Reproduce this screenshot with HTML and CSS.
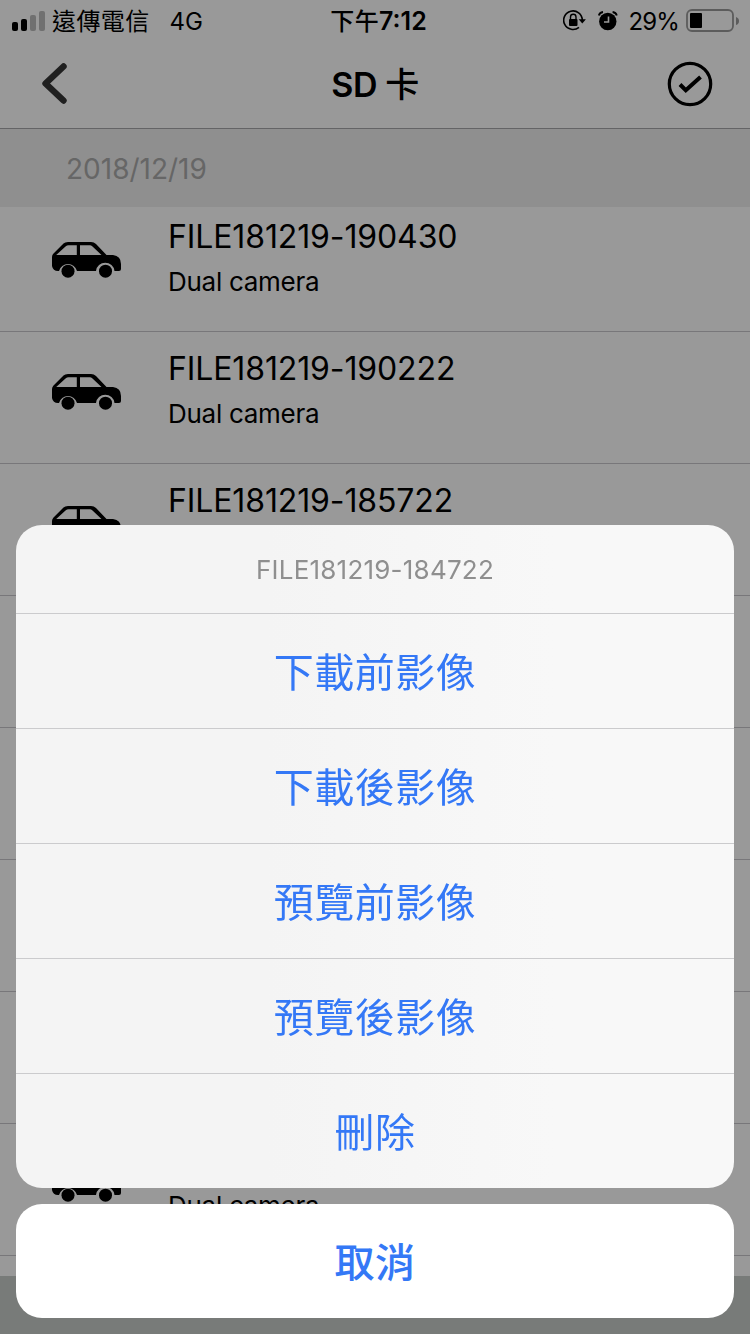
FILE: index.html
```html
<!DOCTYPE html>
<html lang="zh-Hant">
<head>
    <meta charset="UTF-8">
    <meta name="viewport" content="width=device-width, initial-scale=1.0">
    <title>SD 卡</title>
    <link rel="stylesheet" href="styles.css">
</head>
<body>

    <svg class="symbols" width="0" height="0">
        <symbol id="car" viewBox="0 0 70 37">
            <path fill-rule="evenodd" d="M0 27V15Q0 13 1.500 11.500L11.500 1.500Q13 0 16 0H39Q42 0 44 2L54.500 13H61Q69 14 69 22V27Q69 29 67 29H62.500A9.300 9.300 0 0 0 44 29H25A9.300 9.300 0 0 0 7 29H6Q1 29 0 24ZM4.200 13H24.800V3.300H16.500Q15 3.300 13.500 4.500ZM28 3.300V13H49.500L40.500 4.500Q39 3.300 38 3.300Z"/>
            <circle cx="16" cy="29.200" r="6.500"/>
            <circle cx="53.500" cy="29.200" r="6.500"/>
        </symbol>
    </svg>

    <div class="status-bar">
        <div class="status-left">
            <svg width="34" height="20" viewBox="0 0 34 20">
                <rect x="0" y="11" width="6" height="9" rx="2"/>
                <rect x="9" y="8" width="6" height="12" rx="2"/>
                <rect x="18" y="4" width="6" height="16" rx="2" fill="#bbb"/>
                <rect x="27" y="0" width="6" height="20" rx="2" fill="#bbb"/>
            </svg>
            <span class="carrier">遠傳電信</span>
            <span class="network">4G</span>
        </div>
        <div class="time">下午<b>7:12</b></div>
        <div class="status-right">
            <svg class="lock" width="23" height="21" viewBox="0 0 23 21">
                <path d="M16 17.300A9.300 9.300 0 1 1 19.300 10" fill="none" stroke="#000" stroke-width="1.600"/>
                <path d="M15.700 9.300H22.900L19.300 13.500Z"/>
                <rect x="6" y="9" width="8.500" height="7" rx="1"/>
                <path d="M7.500 9.500V7A2.700 2.700 0 0 1 13 7V9.500" fill="none" stroke="#000" stroke-width="1.400"/>
            </svg>
            <svg class="alarm" width="20" height="20" viewBox="0 0 20 20">
                <circle cx="9.800" cy="10.500" r="8.700"/>
                <path d="M0.800 4.500Q1.500 1.500 5 1M18.800 4.500Q18 1.500 14.600 1" fill="none" stroke="#000" stroke-width="1.800"/>
                <path d="M10.500 5.500V11H6" fill="none" stroke="#fff" stroke-width="1.600"/>
            </svg>
            <span class="percent">29%</span>
            <svg width="54" height="24" viewBox="0 0 54 24">
                <rect x="1" y="1" width="46" height="21" rx="5" fill="none" stroke="#999" stroke-width="1.800"/>
                <rect x="4" y="4" width="12" height="15" rx="1"/>
                <path d="M50 8Q53 9 53 12Q53 15 50 16Z" fill="#999"/>
            </svg>
        </div>
    </div>

    <div class="nav-bar">
        <svg width="26" height="42" viewBox="0 0 26 42">
            <path d="M21.500 3.500L3.500 20.500L21.500 37.500" fill="none" stroke="#363636" stroke-width="6.400" stroke-linecap="round" stroke-linejoin="round"/>
        </svg>
        <h1>SD <span>卡</span></h1>
        <svg width="46" height="46" viewBox="0 0 46 46">
            <circle cx="23" cy="23" r="20.700" fill="none" stroke="#000" stroke-width="3.200"/>
            <path d="M13 23.500L18.800 29.200L33.500 16" fill="none" stroke="#000" stroke-width="4"/>
        </svg>
    </div>

    <div class="section">2018/12/19</div>

    <div class="file-list" id="fileList"></div>

    <div class="bottom-bar"></div>

    <div class="overlay">
        <div class="sheet">
            <div class="sheet-title">FILE181219-184722</div>
            <button>下載前影像</button>
            <button>下載後影像</button>
            <button>預覽前影像</button>
            <button>預覽後影像</button>
            <button>刪除</button>
        </div>
        <button class="cancel">取消</button>
    </div>

    <script>
        const archivos = [
            'FILE181219-190430',
            'FILE181219-190222',
            'FILE181219-185722',
            'FILE181219-185222',
            'FILE181219-184722',
            'FILE181219-184222',
            'FILE181219-183722',
            'FILE181219-183222'
        ];

        const lista = document.getElementById('fileList');
        archivos.forEach(nombre => {
            lista.innerHTML += `
                <div class="file">
                    <svg class="car" width="70" height="37"><use href="#car"/></svg>
                    <div class="info">
                        <div class="name">${nombre}</div>
                        <div class="type">Dual camera</div>
                    </div>
                </div>
            `;
        });
    </script>

</body>
</html>
```
FILE: styles.css
```css
* {
    box-sizing: border-box;
}
body {
    font-family: Inter, "Noto Sans CJK TC", sans-serif;
    background-color: #fff;
    color: #000;
    margin: 0;
    height: 1334px;
    display: flex;
    flex-direction: column;
    overflow: hidden;
}
svg {
    display: block;
    flex: none;
}
.symbols {
    position: absolute;
}
.status-bar {
    flex: none;
    display: grid;
    grid-template-columns: 1fr auto 1fr;
    align-items: center;
    height: 40px;
    padding: 0 10px 0 12px;
    font-size: 24px;
    line-height: 38px;
    white-space: nowrap;
}
.status-left, .status-right {
    display: flex;
    align-items: center;
}
.status-right {
    justify-content: flex-end;
}
.carrier {
    margin-left: 6px;
    padding-top: 2px;
    letter-spacing: 0.4px;
}
.network {
    margin-left: 20px;
    padding-top: 2px;
}
.time {
    padding: 2px 0 0 5px;
    font-weight: 500;
    letter-spacing: 0.4px;
}
.time b {
    font-size: 25px;
    font-weight: 600;
    letter-spacing: 0;
}
.alarm {
    margin-left: 12px;
}
.percent {
    margin: 0 7px 0 11px;
    padding-top: 2px;
    letter-spacing: -0.9px;
}
.nav-bar {
    flex: none;
    display: grid;
    grid-template-columns: 46px 1fr 46px;
    align-items: center;
    height: 89px;
    padding: 0 37px 0 42px;
    border-bottom: 1px solid #a7a7aa;
}
.nav-bar h1 {
    margin: 0;
    padding: 0 5px 3px 0;
    font-size: 34px;
    font-weight: 600;
    letter-spacing: -0.4px;
    text-align: center;
}
.nav-bar h1 span {
    font-weight: 500;
}
.section {
    flex: none;
    height: 78px;
    padding-left: 66px;
    background-color: #efefef;
    color: #aaa;
    font-size: 28px;
    line-height: 80px;
}
.file-list {
    flex: none;
    margin-top: -7px;
}
.file {
    display: flex;
    height: 132px;
    padding-left: 52px;
    border-bottom: 1px solid #c8c7cc;
}
.car {
    margin-top: 42px;
}
.info {
    margin-left: 46px;
}
.name {
    margin-top: 17px;
    font-size: 32px;
    line-height: 40px;
    letter-spacing: -0.12px;
}
.type {
    margin-top: 9px;
    font-size: 26px;
    line-height: 32px;
    letter-spacing: -0.28px;
}
.bottom-bar {
    flex: none;
    height: 58px;
    margin-top: 20px;
    background-color: #c8cdca;
}
.overlay {
    position: fixed;
    inset: 0;
    display: flex;
    flex-direction: column;
    justify-content: flex-end;
    padding: 16px;
    background-color: rgba(0, 0, 0, 0.4);
}
.sheet {
    margin-bottom: 16px;
    border-radius: 26px;
    background: linear-gradient(to right, #f4f4f4 35%, #f8f8f8 75%);
    overflow: hidden;
}
.sheet-title {
    height: 88px;
    color: #8f8f8f;
    font-size: 26px;
    line-height: 90px;
    letter-spacing: 0.22px;
    text-align: center;
}
button {
    display: block;
    width: 100%;
    height: 115px;
    padding: 3px 0 0;
    border: none;
    border-top: 1px solid #cbcbcd;
    background: none;
    color: #3478f6;
    font-family: inherit;
    font-size: 40px;
    line-height: 46px;
    letter-spacing: 0.5px;
    cursor: pointer;
}
.cancel {
    flex: none;
    height: 114px;
    border: none;
    border-radius: 26px;
    background-color: #fff;
    font-weight: 500;
}
```
